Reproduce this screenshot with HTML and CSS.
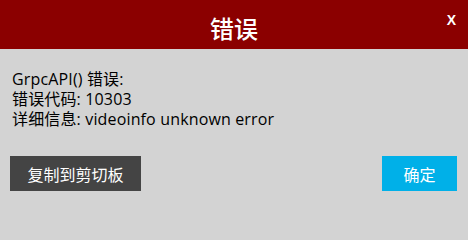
FILE: index.html
```html
<!DOCTYPE html>
<html lang="zh-CN">
<head>
<meta charset="utf-8">
<link rel="stylesheet" href="styles.css">
</head>
<body>
<div class="dialog">
  <div class="header">
    <div class="title">错误</div>
    <div class="close">X</div>
  </div>
  <div class="content">
    <div class="line">GrpcAPI() 错误:</div>
    <div class="line">错误代码: 10303</div>
    <div class="line">详细信息: videoinfo unknown error</div>
  </div>
  <div class="footer">
    <div class="btn btn-copy">复制到剪切板</div>
    <div class="btn btn-ok">确定</div>
  </div>
</div>
</body>
</html>
```

FILE: styles.css
```css
html, body {
  margin: 0;
  padding: 0;
}
body {
  width: 468px;
  height: 201px;
  background: #d3d3d3;
  font-family: "Open Sans", "Noto Sans CJK SC", sans-serif;
  overflow: hidden;
}
.dialog {
  display: flex;
  flex-direction: column;
  height: 201px;
  background: #d3d3d3;
}
.header {
  position: relative;
  height: 49px;
  background: #8b0000;
  display: flex;
  align-items: center;
  justify-content: center;
  flex-shrink: 0;
}
.title {
  color: #ffffff;
  font-family: "Noto Sans CJK SC", sans-serif;
  font-size: 24px;
  font-weight: 500;
  line-height: 24px;
  margin-top: 6px;
}
.close {
  position: absolute;
  top: 12px;
  right: 12px;
  color: #ffffff;
  font-family: "Liberation Sans", sans-serif;
  font-size: 14px;
  font-weight: bold;
  line-height: 16px;
}
.content {
  padding: 20px 12px 0 12px;
  color: #000000;
  font-size: 16px;
  letter-spacing: 0.15px;
  line-height: 20px;
  flex: 1;
}
.footer {
  display: flex;
  justify-content: space-between;
  align-items: center;
  padding: 0 11px 10px 10px;
}
.btn {
  height: 35px;
  display: flex;
  align-items: center;
  justify-content: center;
  color: #ffffff;
  font-family: "Noto Sans CJK SC", sans-serif;
  font-size: 16px;
}
.btn-copy {
  width: 131px;
  background: #444444;
}
.btn-ok {
  width: 75px;
  background: #00b0e8;
}
```
